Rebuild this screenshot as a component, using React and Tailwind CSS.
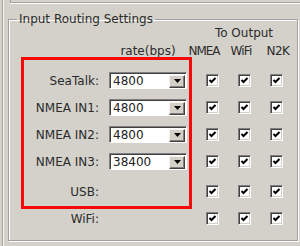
import React from "react";

const FONT = { fontFamily: '"DejaVu Sans", Verdana, sans-serif' };

const rows = [
  { label: "SeaTalk:", rate: "4800" },
  { label: "NMEA IN1:", rate: "4800" },
  { label: "NMEA IN2:", rate: "4800" },
  { label: "NMEA IN3:", rate: "38400" },
];

function CheckBox() {
  return (
    <span className="block w-[13px] h-[13px] border border-t-[#808080] border-l-[#808080] border-b-white border-r-white bg-white shadow-[inset_1px_1px_0_#404040,inset_-1px_-1px_0_#d4d0c8]">
      <svg width="11" height="11" viewBox="0 0 11 11" className="block">
        <polyline points="2.5,5 4.5,7 8.5,3" fill="none" stroke="#000" strokeWidth="2" />
      </svg>
    </span>
  );
}

function Combo({ value }) {
  return (
    <div className="flex items-center w-[78px] h-[17px] border border-t-[#808080] border-l-[#808080] border-b-white border-r-white bg-white shadow-[inset_1px_1px_0_#404040]">
      <span className="flex-1 pl-[3px] pt-px text-[12px] leading-[13px] text-[#222]">{value}</span>
      <span className="flex items-center justify-center w-[16px] h-[13px] mr-px mt-px bg-[#d4d0c8] border border-t-[#f4f3f0] border-l-[#f4f3f0] border-b-[#404040] border-r-[#404040] shadow-[inset_-1px_-1px_0_#808080]">
        <svg width="7" height="4" viewBox="0 0 7 4" className="block">
          <polygon points="0,0 7,0 3.5,4" fill="#000" />
        </svg>
      </span>
    </div>
  );
}

export default function App() {
  return (
    <div className="relative w-[300px] h-[246px] overflow-hidden bg-[#d4d1ca] text-[#2b2b2b]" style={FONT}>
      {/* left edge of the tab page */}
      <div className="absolute left-[2px] top-0 bottom-0 w-[2px] border-l border-l-[#a8a59e] border-r border-r-[#f6f5f2]" />

      {/* bottom edge of the box above */}
      <div className="ml-[10px] h-[3px] border-l border-b border-[#a0a0a0] shadow-[0_1px_0_#fff]" />

      <fieldset className="mt-[9px] ml-[8px] w-[290px] h-[229px] border border-[#a0a0a0] shadow-[inset_1px_1px_0_#fff,1px_1px_0_#fff]">
        <legend className="ml-[8px] px-[2px] h-[14px] text-[12px] leading-[14px]">
          Input Routing Settings
        </legend>

        <div className="grid grid-cols-[100px_87px_32px_32px_32px] text-[12px] leading-[14px]">
          <div className="col-start-3 col-span-3 h-[14px] text-center">To Output</div>

          <div className="col-start-2 mt-[4px] w-[78px] text-center">rate(bps)</div>
          <div className="mt-[4px] flex justify-center pr-[16px] whitespace-nowrap tracking-[-1px]">NMEA</div>
          <div className="mt-[4px] flex justify-center pr-[6px] whitespace-nowrap tracking-[-0.8px]">WiFi</div>
          <div className="mt-[4px] flex justify-center pl-[4px] whitespace-nowrap tracking-[-0.5px]">N2K</div>

          <div className="col-span-5 h-[9px]" />

          {rows.map((r) => (
            <React.Fragment key={r.label}>
              <div className="h-[27px] flex items-center justify-end pr-[10px]">{r.label}</div>
              <div className="h-[27px] flex items-center">
                <Combo value={r.rate} />
              </div>
              <div className="h-[27px] flex items-center justify-center"><CheckBox /></div>
              <div className="h-[27px] flex items-center justify-center"><CheckBox /></div>
              <div className="h-[27px] flex items-center justify-center"><CheckBox /></div>
            </React.Fragment>
          ))}

          <div className="col-span-5 h-[3px]" />

          {["USB:", "WiFi:"].map((l) => (
            <React.Fragment key={l}>
              <div className="col-span-2 h-[27px] flex items-center justify-end pr-[97px]">{l}</div>
              <div className="h-[27px] flex items-center justify-center"><CheckBox /></div>
              <div className="h-[27px] flex items-center justify-center"><CheckBox /></div>
              <div className="h-[27px] flex items-center justify-center"><CheckBox /></div>
            </React.Fragment>
          ))}
        </div>
      </fieldset>

      {/* red annotation box */}
      <div className="absolute left-[21px] top-[57px] w-[171px] h-[152px] border-[3px] border-[#f50a0a] pointer-events-none" />
    </div>
  );
}
